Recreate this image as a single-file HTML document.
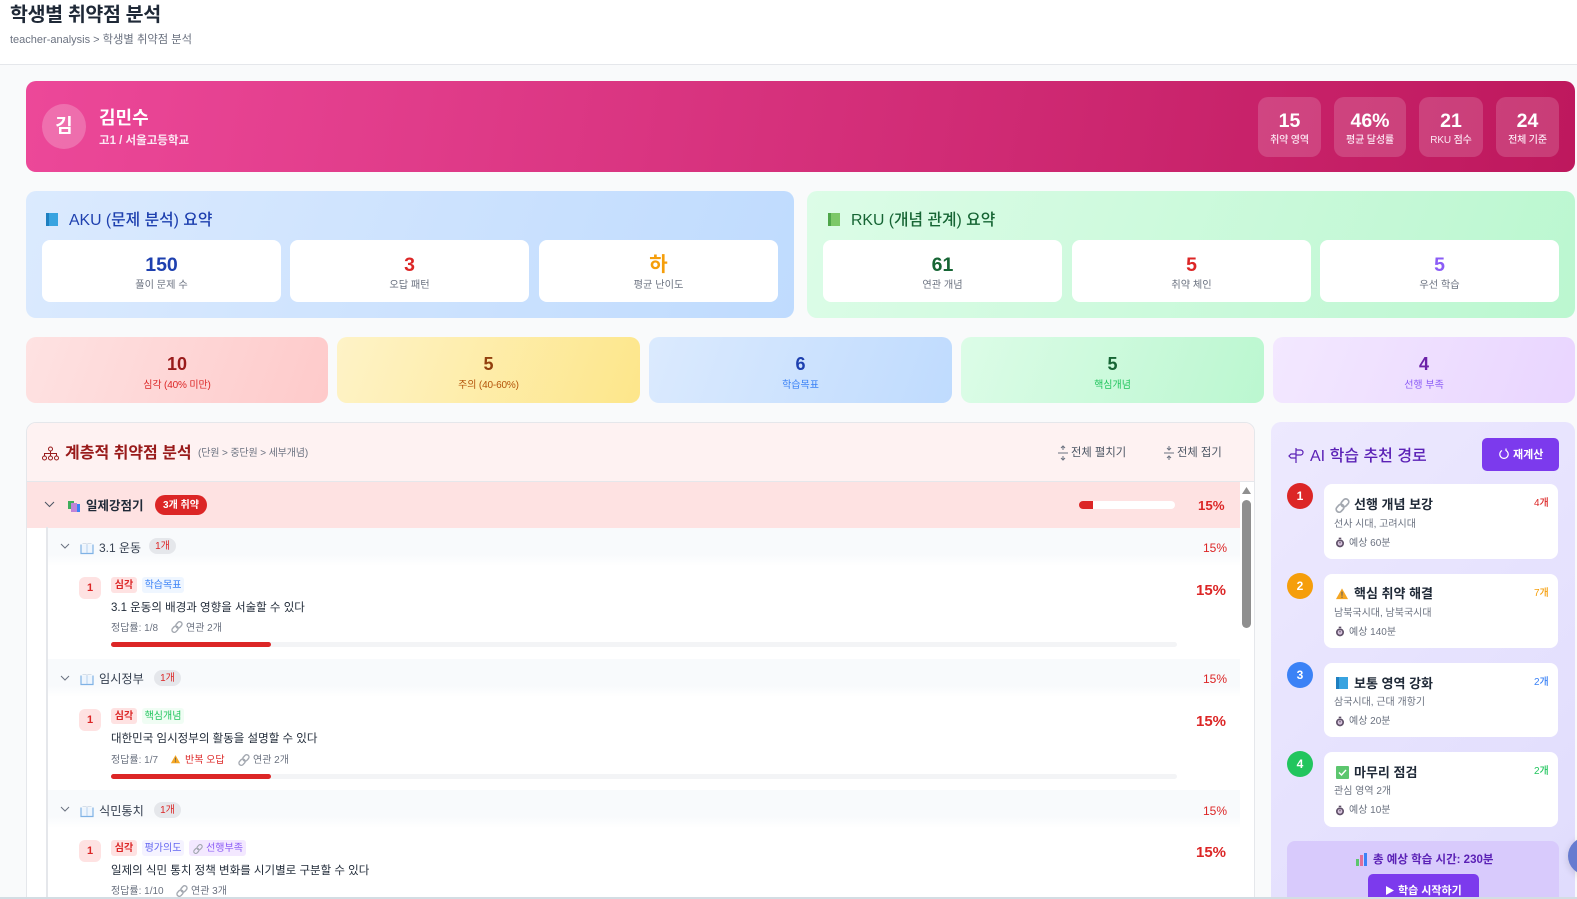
<!DOCTYPE html>
<html lang="ko"><head><meta charset="utf-8"><title>학생별 취약점 분석</title>
<style>
html,body{margin:0;padding:0;width:1577px;height:899px;overflow:hidden;background:#f9fafb;font-family:"Liberation Sans","Noto Sans CJK KR",sans-serif;color:#1f2937}
*{box-sizing:border-box}
#page{position:relative;width:1577px;height:899px;overflow:hidden;background:#f9fafb}
.a{position:absolute}
.t{position:absolute;line-height:20px;white-space:nowrap}
.c{text-align:center}
.b{font-weight:700}
.m{font-weight:500}
.card{position:absolute;background:#fff;border-radius:8px}
svg{position:absolute;overflow:visible}
.tag{position:absolute;height:16px;line-height:17px;border-radius:3px;font-size:10px;text-align:center;white-space:nowrap}
.num{position:absolute;left:79px;width:22px;height:22px;border-radius:6px;background:#fee2e2;color:#dc2626;font-size:11px;font-weight:700;text-align:center;line-height:22px}
.bar{position:absolute;left:111px;width:1066px;height:5px;background:#f3f4f6;border-radius:3px}
.bar i{position:absolute;left:0;top:0;height:5px;width:160px;background:#dc2626;border-radius:3px}
.ch{position:absolute;left:48px;width:1192px;height:38px;background:linear-gradient(#f8fafc,#f8fafc 70%,#fff)}
.pill{position:absolute;height:16px;line-height:17px;border-radius:8px;background:#e5e7eb;color:#dc2626;font-size:10px;text-align:center}
.step{position:absolute;left:1287px;width:26px;height:26px;border-radius:50%;color:#fff;font-size:12px;font-weight:700;text-align:center;line-height:26px}
</style></head><body>
<div id="page">
<svg width="0" height="0" style="position:absolute">
<symbol id="book" viewBox="0 0 14 14"><path d="M1 3.500V12.500H13V3.500" fill="#eef5fd" stroke="#7fb2e5" stroke-width="1.200"/><path d="M7 3.500V12" stroke="#a9c9ec" stroke-width=".8"/><path d="M2.500 2.500h3.500l1 1 1-1h3.500" fill="none" stroke="#d5dee9" stroke-width=".9"/></symbol>
<symbol id="link" viewBox="0 0 14 14"><g fill="none" stroke="#a3a8b0" stroke-width="1.600"><rect x="6.500" y="0.500" width="5.500" height="8" rx="2.700" transform="rotate(42 9.200 4.500)"/><rect x="2" y="5.500" width="5.500" height="8" rx="2.700" transform="rotate(42 4.700 9.500)"/></g></symbol>
<symbol id="warn" viewBox="0 0 14 14"><path d="M7 1.500 13.500 13H.5z" fill="#f5a623"/><path d="M6.400 5h1.200l-.2 4.500h-.8zM6.400 10.300h1.200v1.300H6.400z" fill="#4b5563"/></symbol>
<symbol id="watch" viewBox="0 0 12 12"><circle cx="6" cy="7" r="4.800" fill="#5f5068"/><circle cx="6" cy="7" r="2.800" fill="#d8c4de"/><path d="M6 7V5" stroke="#3b2f42" stroke-width="1.100"/><path d="M4.500 1h3" stroke="#5f5068" stroke-width="1.600"/></symbol>
</svg>

<!-- header -->
<div class="a" style="left:0;top:0;width:1577px;height:65px;background:#fff;border-bottom:1px solid #e5e7eb"></div>
<div class="t b" style="left:10px;top:5px;font-size:19.500px;letter-spacing:-.35px;color:#1f2937">학생별 취약점 분석</div>
<div class="t" style="left:10px;top:30px;font-size:11px;color:#6b7280">teacher-analysis &gt; <span style="font-size:11.300px">학생별 취약점 분석</span></div>

<!-- hero -->
<div class="a" style="left:26px;top:81px;width:1549px;height:91px;border-radius:10px;background:linear-gradient(100deg,#ec4899,#be185d)"></div>
<div class="a c b" style="left:42px;top:104px;width:44px;height:45px;border-radius:50%;background:rgba(255,255,255,.22);color:#fff;font-size:19px;line-height:46px">김</div>
<div class="t b" style="left:99px;top:108px;font-size:18px;color:#fff">김민수</div>
<div class="t b" style="left:99px;top:131px;font-size:11.500px;color:#fce7f3">고1 / 서울고등학교</div>
<div class="a" style="left:1258px;top:97px;width:63px;height:60px;border-radius:10px;background:rgba(255,255,255,.16)"></div>
<div class="a" style="left:1334px;top:97px;width:72px;height:60px;border-radius:10px;background:rgba(255,255,255,.16)"></div>
<div class="a" style="left:1419px;top:97px;width:64px;height:60px;border-radius:10px;background:rgba(255,255,255,.16)"></div>
<div class="a" style="left:1496px;top:97px;width:63px;height:60px;border-radius:10px;background:rgba(255,255,255,.16)"></div>
<div class="t c b" style="left:1258px;width:63px;top:111px;font-size:19.500px;color:#fff">15</div>
<div class="t c b" style="left:1334px;width:72px;top:111px;font-size:19.500px;color:#fff">46%</div>
<div class="t c b" style="left:1419px;width:64px;top:111px;font-size:19.500px;color:#fff">21</div>
<div class="t c b" style="left:1496px;width:63px;top:111px;font-size:19.500px;color:#fff">24</div>
<div class="t c m" style="left:1258px;width:63px;top:131px;font-size:10px;letter-spacing:-.15px;color:#fce7f3">취약 영역</div>
<div class="t c m" style="left:1334px;width:72px;top:131px;font-size:10px;letter-spacing:-.15px;color:#fce7f3">평균 달성률</div>
<div class="t c m" style="left:1419px;width:64px;top:131px;font-size:10px;letter-spacing:-.15px;color:#fce7f3">RKU 점수</div>
<div class="t c m" style="left:1496px;width:63px;top:131px;font-size:10px;letter-spacing:-.15px;color:#fce7f3">전체 기준</div>

<!-- AKU / RKU -->
<div class="a" style="left:26px;top:191px;width:768px;height:127px;border-radius:10px;background:linear-gradient(110deg,#dbeafe,#bfdbfe)"></div>
<svg style="left:45px;top:212px" width="14" height="15" viewBox="0 0 14 15"><path d="M1 1h12v13H1z" fill="#38a3e0"/><path d="M1 1h3v13H1z" fill="#1e7fc0"/></svg>
<div class="t m" style="left:69px;top:211px;font-size:15.800px;color:#1e40af">AKU (문제 분석) 요약</div>
<div class="a" style="left:807px;top:191px;width:768px;height:127px;border-radius:10px;background:linear-gradient(110deg,#dcfce7,#bbf7d0)"></div>
<svg style="left:827px;top:212px" width="14" height="15" viewBox="0 0 14 15"><path d="M1 1h12v13H1z" fill="#7cc868"/><path d="M1 1h3v13H1z" fill="#4ea64a"/></svg>
<div class="t m" style="left:851px;top:211px;font-size:15.800px;color:#166534">RKU (개념 관계) 요약</div>

<div class="card" style="left:42px;top:240px;width:239px;height:62px"></div>
<div class="card" style="left:290px;top:240px;width:239px;height:62px"></div>
<div class="card" style="left:539px;top:240px;width:239px;height:62px"></div>
<div class="card" style="left:823px;top:240px;width:239px;height:62px"></div>
<div class="card" style="left:1072px;top:240px;width:239px;height:62px"></div>
<div class="card" style="left:1320px;top:240px;width:239px;height:62px"></div>
<div class="t c b" style="left:42px;width:239px;top:255px;font-size:19.500px;color:#1e40af">150</div>
<div class="t c b" style="left:290px;width:239px;top:255px;font-size:19.500px;color:#dc2626">3</div>
<div class="t c b" style="left:539px;width:239px;top:255px;font-size:20px;color:#f59e0b">하</div>
<div class="t c b" style="left:823px;width:239px;top:255px;font-size:19.500px;color:#166534">61</div>
<div class="t c b" style="left:1072px;width:239px;top:255px;font-size:19.500px;color:#dc2626">5</div>
<div class="t c b" style="left:1320px;width:239px;top:255px;font-size:19.500px;color:#8b5cf6">5</div>
<div class="t c" style="left:42px;width:239px;top:276px;font-size:10.200px;color:#6b7280">풀이 문제 수</div>
<div class="t c" style="left:290px;width:239px;top:276px;font-size:10.200px;color:#6b7280">오답 패턴</div>
<div class="t c" style="left:539px;width:239px;top:276px;font-size:10.200px;color:#6b7280">평균 난이도</div>
<div class="t c" style="left:823px;width:239px;top:276px;font-size:10.200px;color:#6b7280">연관 개념</div>
<div class="t c" style="left:1072px;width:239px;top:276px;font-size:10.200px;color:#6b7280">취약 체인</div>
<div class="t c" style="left:1320px;width:239px;top:276px;font-size:10.200px;color:#6b7280">우선 학습</div>

<!-- stat row -->
<div class="a" style="left:26px;top:337px;width:302px;height:66px;border-radius:10px;background:linear-gradient(110deg,#fee2e2,#fecaca)"></div>
<div class="a" style="left:337px;top:337px;width:303px;height:66px;border-radius:10px;background:linear-gradient(110deg,#fef3c7,#fde68a)"></div>
<div class="a" style="left:649px;top:337px;width:303px;height:66px;border-radius:10px;background:linear-gradient(110deg,#dbeafe,#bfdbfe)"></div>
<div class="a" style="left:961px;top:337px;width:303px;height:66px;border-radius:10px;background:linear-gradient(110deg,#dcfce7,#bbf7d0)"></div>
<div class="a" style="left:1273px;top:337px;width:302px;height:66px;border-radius:10px;background:linear-gradient(110deg,#f3e8ff,#e9d5ff)"></div>
<div class="t c b" style="left:26px;width:302px;top:354px;font-size:18px;color:#991b1b">10</div>
<div class="t c b" style="left:337px;width:303px;top:354px;font-size:18px;color:#92400e">5</div>
<div class="t c b" style="left:649px;width:303px;top:354px;font-size:18px;color:#1e40af">6</div>
<div class="t c b" style="left:961px;width:303px;top:354px;font-size:18px;color:#166534">5</div>
<div class="t c b" style="left:1273px;width:302px;top:354px;font-size:18px;color:#6b21a8">4</div>
<div class="t c" style="left:26px;width:302px;top:376px;font-size:10px;letter-spacing:-.15px;color:#dc2626">심각 (40% 미만)</div>
<div class="t c" style="left:337px;width:303px;top:376px;font-size:10px;letter-spacing:-.15px;color:#b45309">주의 (40-60%)</div>
<div class="t c" style="left:649px;width:303px;top:376px;font-size:10px;color:#3b82f6">학습목표</div>
<div class="t c" style="left:961px;width:303px;top:376px;font-size:10px;color:#22c55e">핵심개념</div>
<div class="t c" style="left:1273px;width:302px;top:376px;font-size:10px;color:#8b5cf6">선행 부족</div>

<!-- main panel -->
<div class="a" style="left:26px;top:422px;width:1229px;height:480px;background:#fff;border:1px solid #e5e7eb;border-radius:10px 10px 0 0;overflow:hidden">
  <div class="a" style="left:0;top:0;width:1229px;height:59px;background:#fef2f2;border-bottom:1px solid #e5e7eb"></div>
  <div class="a" style="left:0;top:59px;width:1213px;height:46px;background:#fee2e2"></div>
  <div class="a" style="left:1213px;top:59px;width:14px;height:420px;background:#fff"></div>
</div>
<svg style="left:42px;top:446px" width="17" height="15" viewBox="0 0 17 15" fill="none" stroke="#991b1b" stroke-width="1"><circle cx="8.500" cy="3" r="2"/><circle cx="2.500" cy="12" r="2"/><circle cx="8.500" cy="12" r="2"/><circle cx="14.500" cy="12" r="2"/><path d="M8.500 5v5M2.500 10V7.500h12V10"/></svg>
<div class="t b" style="left:65px;top:444px;font-size:16px;color:#991b1b">계층적 취약점 분석</div>
<div class="t" style="left:198px;top:444px;font-size:10px;letter-spacing:-.13px;color:#6b7280">(단원 &gt; 중단원 &gt; 세부개념)</div>
<svg style="left:1058px;top:446px" width="10" height="14" viewBox="0 0 10 14" fill="none" stroke="#6b7280" stroke-width="1"><path d="M0 7h10M5 0v4M3 2l2-2 2 2M5 14v-4M3 12l2 2 2-2"/></svg>
<div class="t" style="left:1071px;top:443px;font-size:11.300px;color:#4b5563">전체 펼치기</div>
<svg style="left:1164px;top:446px" width="10" height="14" viewBox="0 0 10 14" fill="none" stroke="#6b7280" stroke-width="1"><path d="M0 7h10M5 0v4M3 2l2 2 2-2M5 14v-4M3 12l2-2 2 2"/></svg>
<div class="t" style="left:1177px;top:443px;font-size:11.300px;color:#4b5563">전체 접기</div>

<!-- unit row -->
<svg style="left:44px;top:501px" width="11" height="7" viewBox="0 0 11 7" fill="none" stroke="#4b5563" stroke-width="1"><path d="M1 1l4.500 4.500L10 1"/></svg>
<svg style="left:67px;top:500px" width="14" height="13" viewBox="0 0 14 13"><rect x="6" y="4" width="7" height="8" fill="#3b82f6"/><rect x="1" y="1" width="6" height="8" fill="#3fae5c"/><rect x="4" y="3" width="6" height="9" fill="#c084d8"/></svg>
<div class="t b" style="left:86px;top:496px;font-size:12.500px;color:#1f2937">일제강점기</div>
<div class="a c b" style="left:155px;top:495px;width:52px;height:20px;border-radius:10px;background:#dc2626;color:#fff;font-size:10px;line-height:21px">3개 취약</div>
<div class="a" style="left:1079px;top:501px;width:96px;height:8px;border-radius:4px;background:#fff"></div>
<div class="a" style="left:1079px;top:501px;width:14px;height:8px;border-radius:4px 0 0 4px;background:#dc2626"></div>
<div class="t b" style="left:1198px;top:496px;font-size:13.300px;color:#dc2626">15%</div>

<!-- tree line -->
<div class="a" style="left:46px;top:527px;width:2px;height:372px;background:#e5e7eb"></div>

<!-- chapter 1 -->
<div class="ch" style="top:528px"></div>
<svg style="left:60px;top:543px" width="10" height="6" viewBox="0 0 10 6" fill="none" stroke="#6b7280" stroke-width="1"><path d="M1 1l4 4 4-4"/></svg>
<svg style="left:80px;top:541px" width="14" height="14"><use href="#book"/></svg>
<div class="t" style="left:99px;top:538px;font-size:12px;color:#374151">3.1 운동</div>
<div class="pill" style="left:149px;top:538px;width:27px">1개</div>
<div class="t" style="left:1203px;top:538px;font-size:12px;color:#dc2626">15%</div>
<div class="num" style="top:577px">1</div>
<div class="tag b" style="left:111px;top:577px;width:26px;background:#fee2e2;color:#dc2626">심각</div>
<div class="tag" style="left:142px;top:577px;width:42px;background:#eff6ff;color:#3b82f6">학습목표</div>
<div class="t" style="left:111px;top:598px;font-size:11.500px;color:#1f2937">3.1 운동의 배경과 영향을 서술할 수 있다</div>
<div class="t" style="left:111px;top:619px;font-size:10px;color:#6b7280">정답률: 1/8</div>
<svg style="left:171px;top:621px" width="12" height="12"><use href="#link"/></svg>
<div class="t" style="left:186px;top:619px;font-size:10px;color:#6b7280">연관 2개</div>
<div class="bar" style="top:642px"><i></i></div>
<div class="t b" style="left:1196px;top:581px;font-size:15px;color:#dc2626">15%</div>

<!-- chapter 2 -->
<div class="ch" style="top:659px"></div>
<svg style="left:60px;top:675px" width="10" height="6" viewBox="0 0 10 6" fill="none" stroke="#6b7280" stroke-width="1"><path d="M1 1l4 4 4-4"/></svg>
<svg style="left:80px;top:672px" width="14" height="14"><use href="#book"/></svg>
<div class="t" style="left:99px;top:669px;font-size:12.200px;color:#374151">임시정부</div>
<div class="pill" style="left:154px;top:670px;width:27px">1개</div>
<div class="t" style="left:1203px;top:669px;font-size:12px;color:#dc2626">15%</div>
<div class="num" style="top:709px">1</div>
<div class="tag b" style="left:111px;top:708px;width:26px;background:#fee2e2;color:#dc2626">심각</div>
<div class="tag" style="left:142px;top:708px;width:42px;background:#f0fdf4;color:#22c55e">핵심개념</div>
<div class="t" style="left:111px;top:729px;font-size:11.500px;color:#1f2937">대한민국 임시정부의 활동을 설명할 수 있다</div>
<div class="t" style="left:111px;top:751px;font-size:10px;color:#6b7280">정답률: 1/7</div>
<svg style="left:170px;top:754px" width="11" height="10"><use href="#warn"/></svg>
<div class="t" style="left:185px;top:751px;font-size:10px;color:#dc2626">반복 오답</div>
<svg style="left:238px;top:754px" width="12" height="12"><use href="#link"/></svg>
<div class="t" style="left:253px;top:751px;font-size:10px;color:#6b7280">연관 2개</div>
<div class="bar" style="top:774px"><i></i></div>
<div class="t b" style="left:1196px;top:712px;font-size:15px;color:#dc2626">15%</div>

<!-- chapter 3 -->
<div class="ch" style="top:790px"></div>
<svg style="left:60px;top:806px" width="10" height="6" viewBox="0 0 10 6" fill="none" stroke="#6b7280" stroke-width="1"><path d="M1 1l4 4 4-4"/></svg>
<svg style="left:80px;top:804px" width="14" height="14"><use href="#book"/></svg>
<div class="t" style="left:99px;top:801px;font-size:12.200px;color:#374151">식민통치</div>
<div class="pill" style="left:154px;top:802px;width:27px">1개</div>
<div class="t" style="left:1203px;top:801px;font-size:12px;color:#dc2626">15%</div>
<div class="num" style="top:840px">1</div>
<div class="tag b" style="left:111px;top:840px;width:26px;background:#fee2e2;color:#dc2626">심각</div>
<div class="tag" style="left:142px;top:840px;width:42px;background:#f5f3ff;color:#6366f1">평가의도</div>
<div class="tag" style="left:189px;top:840px;width:57px;background:#f3e8ff;color:#8b5cf6;padding-left:14px">선행부족</div>
<svg style="left:193px;top:844px" width="10" height="10"><use href="#link"/></svg>
<div class="t" style="left:111px;top:861px;font-size:11.500px;color:#1f2937">일제의 식민 통치 정책 변화를 시기별로 구분할 수 있다</div>
<div class="t" style="left:111px;top:882px;font-size:10px;color:#6b7280">정답률: 1/10</div>
<svg style="left:176px;top:885px" width="12" height="12"><use href="#link"/></svg>
<div class="t" style="left:191px;top:882px;font-size:10px;color:#6b7280">연관 3개</div>
<div class="t b" style="left:1196px;top:843px;font-size:15px;color:#dc2626">15%</div>

<!-- scrollbar -->
<svg style="left:1241px;top:486px" width="11" height="9" viewBox="0 0 11 9"><path d="M5.500 1 10 8H1z" fill="#8f8f8f"/></svg>
<div class="a" style="left:1242px;top:500px;width:9px;height:128px;border-radius:5px;background:#8f8f8f"></div>

<!-- right panel -->
<div class="a" style="left:1271px;top:422px;width:304px;height:480px;border-radius:10px 10px 0 0;background:linear-gradient(135deg,#ede9fe,#e0dcfd)"></div>
<svg style="left:1288px;top:447px" width="16" height="17" viewBox="0 0 16 17" fill="none" stroke="#5b21b6" stroke-width="1.200"><path d="M8 1v15M8 3h4.500a2 2 0 0 1 0 5H8M8 7H3l-2 2 2 2h5"/></svg>
<div class="t m" style="left:1310px;top:447px;font-size:16px;color:#5b21b6">AI 학습 추천 경로</div>
<div class="a" style="left:1482px;top:438px;width:77px;height:33px;border-radius:5px;background:#7c3aed"></div>
<svg style="left:1499px;top:448px" width="11" height="12" viewBox="0 0 11 12" fill="none" stroke="#fff" stroke-width="1.200"><path d="M3 2.500A4.200 4.200 0 1 0 7 2.500M7 .5v2.500"/></svg>
<div class="t b" style="left:1513px;top:445px;font-size:11px;color:#fff">재계산</div>

<div class="step" style="top:483px;background:#dc2626">1</div>
<div class="card" style="left:1324px;top:484px;width:234px;height:75px"></div>
<svg style="left:1335px;top:498px" width="15" height="15"><use href="#link"/></svg>
<div class="t b" style="left:1354px;top:495px;font-size:13px;color:#1f2937">선행 개념 보강</div>
<div class="t m" style="left:1534px;top:494px;font-size:10px;color:#dc2626">4개</div>
<div class="t" style="left:1334px;top:515px;font-size:10px;color:#6b7280">선사 시대, 고려시대</div>
<svg style="left:1335px;top:537px" width="10" height="11"><use href="#watch"/></svg>
<div class="t" style="left:1349px;top:534px;font-size:10px;color:#6b7280">예상 60분</div>

<div class="step" style="top:573px;background:#f59e0b">2</div>
<div class="card" style="left:1324px;top:574px;width:234px;height:74px"></div>
<svg style="left:1335px;top:587px" width="14" height="13"><use href="#warn"/></svg>
<div class="t b" style="left:1354px;top:584px;font-size:13px;color:#1f2937">핵심 취약 해결</div>
<div class="t m" style="left:1534px;top:584px;font-size:10px;color:#f59e0b">7개</div>
<div class="t" style="left:1334px;top:604px;font-size:10px;color:#6b7280">남북국시대, 남북국시대</div>
<svg style="left:1335px;top:626px" width="10" height="11"><use href="#watch"/></svg>
<div class="t" style="left:1349px;top:623px;font-size:10px;color:#6b7280">예상 140분</div>

<div class="step" style="top:662px;background:#3b82f6">3</div>
<div class="card" style="left:1324px;top:663px;width:234px;height:74px"></div>
<svg style="left:1336px;top:676px" width="12" height="14" viewBox="0 0 12 14"><path d="M0 1h12v12H0z" fill="#38a3e0"/><path d="M0 1h3v12H0z" fill="#1e7fc0"/></svg>
<div class="t b" style="left:1354px;top:674px;font-size:13px;color:#1f2937">보통 영역 강화</div>
<div class="t m" style="left:1534px;top:673px;font-size:10px;color:#3b82f6">2개</div>
<div class="t" style="left:1334px;top:693px;font-size:10px;color:#6b7280">삼국시대, 근대 개항기</div>
<svg style="left:1335px;top:716px" width="10" height="11"><use href="#watch"/></svg>
<div class="t" style="left:1349px;top:712px;font-size:10px;color:#6b7280">예상 20분</div>

<div class="step" style="top:751px;background:#22c55e">4</div>
<div class="card" style="left:1324px;top:752px;width:234px;height:75px"></div>
<svg style="left:1336px;top:766px" width="13" height="13" viewBox="0 0 13 13"><rect width="13" height="13" rx="1" fill="#5cc66e"/><path d="M3 6.500l2.500 2.500L10 4" fill="none" stroke="#fff" stroke-width="1.400"/></svg>
<div class="t b" style="left:1354px;top:763px;font-size:13px;color:#1f2937">마무리 점검</div>
<div class="t m" style="left:1534px;top:762px;font-size:10px;color:#22c55e">2개</div>
<div class="t" style="left:1334px;top:782px;font-size:10px;color:#6b7280">관심 영역 2개</div>
<svg style="left:1335px;top:805px" width="10" height="11"><use href="#watch"/></svg>
<div class="t" style="left:1349px;top:801px;font-size:10px;color:#6b7280">예상 10분</div>

<div class="a" style="left:1287px;top:841px;width:272px;height:60px;border-radius:8px 8px 0 0;background:#d8cafc"></div>
<svg style="left:1356px;top:853px" width="12" height="13" viewBox="0 0 12 13"><rect x="0" y="6" width="3" height="7" fill="#5cc66e"/><rect x="4" y="2" width="3" height="11" fill="#e0709a"/><rect x="8" y="0" width="3" height="13" fill="#3b82f6"/></svg>
<div class="t b" style="left:1373px;top:850px;font-size:11.500px;color:#5b21b6">총 예상 학습 시간: 230분</div>
<div class="a" style="left:1368px;top:874px;width:111px;height:30px;border-radius:5px 5px 0 0;background:#7c3aed"></div>
<svg style="left:1386px;top:886px" width="8" height="9" viewBox="0 0 8 9"><path d="M0 0l8 4.500L0 9z" fill="#fff"/></svg>
<div class="t b" style="left:1398px;top:881px;font-size:11px;color:#fff">학습 시작하기</div>

<!-- floating button -->
<div class="a" style="left:1568px;top:837px;width:38px;height:38px;border-radius:50%;background:#667bd0;box-shadow:0 2px 8px rgba(0,0,0,.15)"></div>
<!-- bottom strip -->
<div class="a" style="left:0;top:897px;width:1577px;height:2px;background:#d3dde3"></div>
</div>
</body></html>
